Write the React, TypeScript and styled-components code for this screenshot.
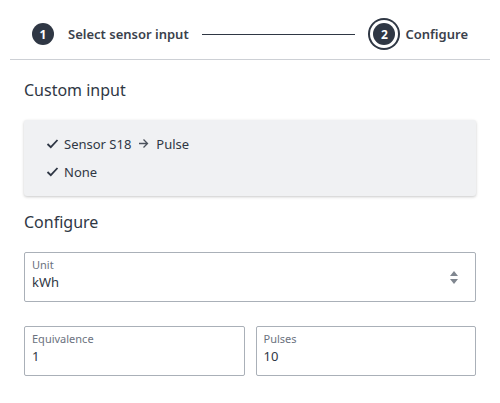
import React from 'react'
import styled, { createGlobalStyle } from 'styled-components'

const GlobalStyle = createGlobalStyle`
  html, body {
    margin: 0;
    padding: 0;
    background: #fff;
    font-family: "Noto Sans", "Open Sans", sans-serif;
    color: #2f3744;
  }
`

const Page = styled.div`
  width: 500px;
  height: 403px;
  box-sizing: border-box;
  padding: 0 10px;
`

const Stepper = styled.div`
  display: flex;
  align-items: center;
  height: 50px;
  padding: 9px 22px 0;
  border-bottom: 1px solid #cdd0d5;
`

const StepDot = styled.div<{ $active?: boolean }>`
  flex: none;
  width: 22px;
  height: 22px;
  border-radius: 50%;
  background: #2f3744;
  color: #fff;
  font-size: 12px;
  font-weight: 700;
  display: flex;
  align-items: center;
  justify-content: center;
  margin-left: ${(p) => (p.$active ? '5px' : '0')};
  box-shadow: ${(p) =>
    p.$active ? '0 0 0 3px #fff, 0 0 0 5px #2f3744' : 'none'};
`

const StepLabel = styled.span<{ $gap: number }>`
  margin-left: ${(p) => p.$gap}px;
  font-size: 13px;
  font-weight: 600;
  color: #3a414c;
  white-space: nowrap;
`

const StepLine = styled.div`
  flex: 1;
  height: 1px;
  background: #2f3744;
  margin: 0 13px 0 13px;
`

const Section = styled.section<{ $top: number }>`
  padding: ${(p) => p.$top}px 14px 0;
`

const Heading = styled.h2`
  margin: 0;
  font-size: 16px;
  font-weight: 400;
  color: #2f3744;
`

const SummaryCard = styled.div`
  margin-top: 19px;
  background: #f0f1f3;
  border-radius: 3px;
  box-shadow: 0 1px 3px rgba(0, 0, 0, 0.22);
  padding: 14px 22px 15px;
  display: flex;
  flex-direction: column;
  gap: 9px;
`

const SummaryRow = styled.div`
  display: flex;
  align-items: center;
  font-size: 13px;
  color: #2f3744;
  height: 19px;
`

const Check = styled.svg`
  width: 13px;
  height: 13px;
  margin-right: 5px;
`

const Arrow = styled.svg`
  width: 11px;
  height: 11px;
  margin: 0 7px;
`

const Field = styled.div<{ $gapTop?: number }>`
  position: relative;
  box-sizing: border-box;
  height: 50px;
  margin-top: ${(p) => p.$gapTop ?? 0}px;
  border: 1px solid #aab0b8;
  border-radius: 2px;
  padding: 5px 7px 0;
  background: #fff;
`

const FieldLabel = styled.div`
  font-size: 11px;
  color: #6b7280;
  line-height: 14px;
`

const FieldValue = styled.div`
  font-size: 13px;
  color: #2f3744;
  line-height: 18px;
  margin-top: 1px;
`

const SortIcon = styled.svg`
  position: absolute;
  right: 16px;
  top: 17px;
  width: 10px;
  height: 15px;
`

const Grid = styled.div`
  margin-top: 24px;
  display: grid;
  grid-template-columns: 1fr 1fr;
  gap: 11px;
`

function CheckIcon() {
  return (
    <Check viewBox="0 0 13 13">
      <path d="M1.5 7 L4.8 10.2 L11.5 3" fill="none" stroke="#2f3744" strokeWidth="1.8" />
    </Check>
  )
}

export default function App() {
  return (
    <>
      <GlobalStyle />
      <Page>
        <Stepper>
          <StepDot>1</StepDot>
          <StepLabel $gap={14}>Select sensor input</StepLabel>
          <StepLine />
          <StepDot $active>2</StepDot>
          <StepLabel $gap={10}>Configure</StepLabel>
        </Stepper>

        <Section $top={19}>
          <Heading>Custom input</Heading>
          <SummaryCard>
            <SummaryRow>
              <CheckIcon />
              Sensor S18
              <Arrow viewBox="0 0 11 11">
                <path d="M1 5.5 H9.5 M5.5 1.5 L9.5 5.5 L5.5 9.5" fill="none" stroke="#4b525c" strokeWidth="1.3" />
              </Arrow>
              Pulse
            </SummaryRow>
            <SummaryRow>
              <CheckIcon />
              None
            </SummaryRow>
          </SummaryCard>
        </Section>

        <Section $top={15}>
          <Heading>Configure</Heading>
          <Field $gapTop={19}>
            <FieldLabel>Unit</FieldLabel>
            <FieldValue>kWh</FieldValue>
            <SortIcon viewBox="0 0 10 15">
              <path d="M5 1 L9 6 H1 Z M1 9 H9 L5 14 Z" fill="#808790" />
            </SortIcon>
          </Field>
          <Grid>
            <Field>
              <FieldLabel>Equivalence</FieldLabel>
              <FieldValue>1</FieldValue>
            </Field>
            <Field>
              <FieldLabel>Pulses</FieldLabel>
              <FieldValue>10</FieldValue>
            </Field>
          </Grid>
        </Section>
      </Page>
    </>
  )
}
